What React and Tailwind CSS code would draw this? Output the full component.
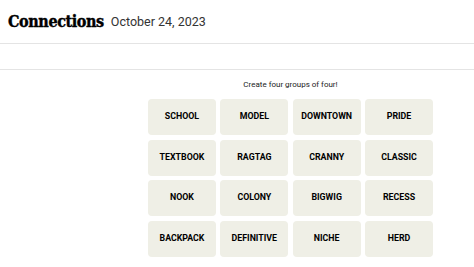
import React from "react";

const words = [
  "SCHOOL", "MODEL", "DOWNTOWN", "PRIDE",
  "TEXTBOOK", "RAGTAG", "CRANNY", "CLASSIC",
  "NOOK", "COLONY", "BIGWIG", "RECESS",
  "BACKPACK", "DEFINITIVE", "NICHE", "HERD",
];

const sans = '"Roboto", "Liberation Sans", Arial, sans-serif';

const App = () => {
  return (
    <div className="min-h-screen w-[474px] bg-white text-black">
      <header className="flex h-[44px] items-center gap-[7px] border-b border-[#e4e4e4] pl-[8px]">
        <h1
          className="text-[16px] font-bold leading-none tracking-[-0.4px] text-black"
          style={{ fontFamily: '"DejaVu Serif Condensed", "DejaVu Serif", serif', WebkitTextStroke: "0.4px black" }}
        >
          Connections
        </h1>
        <span className="mt-[2px] text-[12.5px] leading-none text-[#333]" style={{ fontFamily: sans }}>
          October 24, 2023
        </span>
      </header>

      <div className="h-[26px] border-b border-[#e4e4e4]" />

      <main className="flex flex-col pl-[148px]" style={{ fontFamily: sans }}>
        <p className="w-[285px] pt-[9px] text-center text-[8px] leading-[11px] text-[#222]">
          Create four groups of four!
        </p>
        <div className="mt-[9px] grid w-[285px] grid-cols-4 gap-x-[4.33px] gap-y-[4.5px]">
          {words.map((w) => (
            <button
              key={w}
              className="flex h-[36px] items-center justify-center rounded-[4px] bg-[#efefe6] text-[8.8px] font-bold text-black"
              style={{ fontFamily: sans }}
            >
              {w}
            </button>
          ))}
        </div>
      </main>
    </div>
  );
};

export default App;
